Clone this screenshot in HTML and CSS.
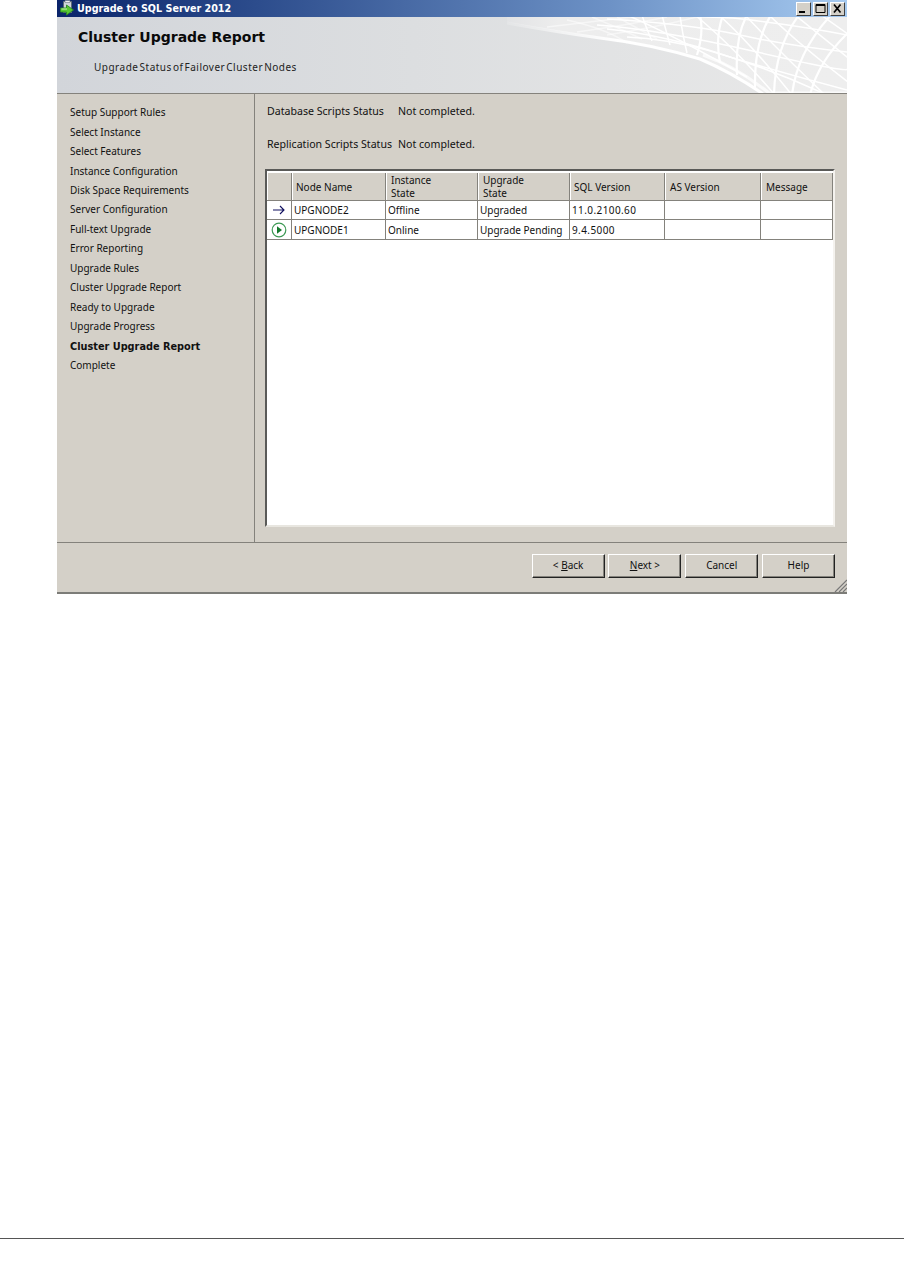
FILE: index.html
```html
<!DOCTYPE html>
<html lang="en">
<head>
<meta charset="utf-8">
<title>Upgrade to SQL Server 2012</title>
<link rel="stylesheet" href="styles.css">
</head>
<body>
<main class="window">
  <div class="titlebar">
    <svg class="app-icon" width="16" height="17" viewBox="0 0 16 17">
      <path d="M4.500 1.500h8v11h-8z" fill="#cfd4da" stroke="#5e6b78"/>
      <path d="M6 .5h5v2H6z" fill="#eef0f2" stroke="#6b7783" stroke-width=".6"/>
      <path d="M1.500 8h6V5l7 5-7 5v-3h-6z" fill="#58c832" stroke="#2a8a22" stroke-width=".9"/>
      <path d="M2.500 9h5.500" stroke="#c8f5b0" fill="none"/>
    </svg>
    <span class="title-text">Upgrade to SQL Server 2012</span>
    <div class="caption-buttons">
      <button class="caption-btn" aria-label="Minimize"><svg width="13" height="11" viewBox="0 0 13 11"><path d="M2 8h6v2H2z" fill="#000"/></svg></button>
      <button class="caption-btn" aria-label="Maximize"><svg width="13" height="11" viewBox="0 0 13 11"><path d="M2 1.500h9v8H2zM2 2.500h9" fill="none" stroke="#000"/></svg></button>
      <button class="caption-btn close" aria-label="Close"><svg width="13" height="11" viewBox="0 0 13 11"><path d="M3 1.500l6.500 8M9.500 1.500l-6.500 8" fill="none" stroke="#000" stroke-width="1.700"/></svg></button>
    </div>
  </div>

  <header class="banner">
    <svg class="mesh" width="340" height="76" viewBox="0 0 340 76">
      <defs>
        <linearGradient id="meshfill" x1="0" x2="1" y1="0" y2="0">
          <stop offset="0" stop-color="#e2e3e5"/>
          <stop offset=".15" stop-color="#ededed"/>
          <stop offset="1" stop-color="#eeeeee"/>
        </linearGradient>
        <linearGradient id="edgefade" gradientUnits="userSpaceOnUse" x1="0" x2="110" y1="0" y2="0">
          <stop offset="0" stop-color="#fff" stop-opacity=".15"/>
          <stop offset="1" stop-color="#fff" stop-opacity="1"/>
        </linearGradient>
      </defs>
      <path d="M0 0H340V76H256Q226 55 193 41Q143 26 93 20Q50 14 0 5z" fill="url(#meshfill)"/>
      <g fill="none" stroke="#fff" stroke-width="1.500" stroke-opacity=".5">
        <path d="M60 3Q100 12 120 26"/>
        <path d="M85 0Q110 10 135 22"/>
        <path d="M110 0L150 22"/>
        <path d="M40 10Q90 4 125 0"/>
        <path d="M70 15Q120 8 160 0"/>
        <path d="M100 18Q150 10 190 0"/>
      </g>
      <g fill="none" stroke="#fff" stroke-width="1.500">
        <path d="M150 -2L226 1Q290 8 340 18"/>
        <path d="M100 2Q183 7 233 18T340 35"/>
        <path d="M90 8Q150 12 250 35T340 51"/>
        <path d="M100 12Q160 18 226 41Q283 58 340 73"/>
        <path d="M120 20Q160 22 200 33Q260 50 320 78"/>
        <path d="M120 -2Q170 20 240 60"/>
        <path d="M188 -2Q225 28 268 78"/>
        <path d="M212 -2Q245 28 285 78"/>
        <path d="M238 -2Q270 32 318 78"/>
        <path d="M262 -2Q295 30 345 68"/>
        <path d="M288 -2L345 44"/>
        <path d="M314 -2L345 20"/>
        <path d="M135 -2Q138 8 145 24"/>
        <path d="M155 -2Q158 10 163 28"/>
        <path d="M173 -2Q175 15 180 36"/>
      </g>
      <g fill="none" stroke="#fff" stroke-width="2.200">
        <path d="M193 -2Q197 15 190 38"/>
        <path d="M216 -2Q208 20 213 46"/>
        <path d="M240 -2Q228 20 230 58"/>
        <path d="M264 -2Q247 25 248 72"/>
        <path d="M292 -2Q268 30 267 78"/>
        <path d="M324 -2Q290 35 285 78"/>
        <path d="M345 12Q312 42 303 78"/>
      </g>
      <path d="M0 6Q50 15 93 21Q143 27 193 42Q226 56 256 77" fill="none" stroke="url(#edgefade)" stroke-width="3"/>
      <path d="M196 38Q230 50 262 76H340" fill="none" stroke="#fff" stroke-width="3" stroke-opacity=".7"/>
    </svg>
    <h1 class="banner-title">Cluster Upgrade Report</h1>
    <p class="banner-sub">Upgrade Status of Failover Cluster Nodes</p>
  </header>

  <div class="body">
    <nav class="steps">
      <a>Setup Support Rules</a>
      <a>Select Instance</a>
      <a>Select Features</a>
      <a>Instance Configuration</a>
      <a>Disk Space Requirements</a>
      <a>Server Configuration</a>
      <a>Full-text Upgrade</a>
      <a>Error Reporting</a>
      <a>Upgrade Rules</a>
      <a>Cluster Upgrade Report</a>
      <a>Ready to Upgrade</a>
      <a>Upgrade Progress</a>
      <a class="current">Cluster Upgrade Report</a>
      <a>Complete</a>
    </nav>
    <section class="content">
      <div class="status-row"><span class="status-label">Database Scripts Status</span><span>Not completed.</span></div>
      <div class="status-row second"><span class="status-label">Replication Scripts Status</span><span>Not completed.</span></div>
      <div class="grid-frame">
        <div class="grid">
          <div class="head corner"></div>
          <div class="head tight">Node Name</div>
          <div class="head two">Instance<br>State</div>
          <div class="head two">Upgrade<br>State</div>
          <div class="head tight">SQL Version</div>
          <div class="head">AS Version</div>
          <div class="head">Message</div>

          <div class="cell mark"><svg width="14" height="10" viewBox="0 0 14 10"><path d="M1 5h11M8 1l4 4-4 4" fill="none" stroke="#101060" stroke-width="1.100"/></svg></div>
          <div class="cell">UPGNODE2</div>
          <div class="cell">Offline</div>
          <div class="cell">Upgraded</div>
          <div class="cell num">11.0.2100.60</div>
          <div class="cell"></div>
          <div class="cell"></div>

          <div class="cell mark"><svg width="16" height="16" viewBox="0 0 16 16"><circle cx="8" cy="8" r="6.800" fill="#fff" stroke="#3d9a55" stroke-width="1.200"/><path d="M6 4.200L11 8l-5 3.800z" fill="#137a2c"/></svg></div>
          <div class="cell">UPGNODE1</div>
          <div class="cell">Online</div>
          <div class="cell">Upgrade Pending</div>
          <div class="cell num">9.4.5000</div>
          <div class="cell"></div>
          <div class="cell"></div>
        </div>
      </div>
    </section>
  </div>

  <footer class="footer">
    <button class="btn">&lt; <u>B</u>ack</button>
    <button class="btn"><u>N</u>ext &gt;</button>
    <button class="btn">Cancel</button>
    <button class="btn">Help</button>
    <svg class="grip" width="13" height="13" viewBox="0 0 13 13"><path d="M1 13L13 1M5 13l8-8M9 13l4-4" fill="none" stroke="#777" stroke-width="1.200"/></svg>
  </footer>
</main>
<hr class="page-rule">
</body>
</html>
```
FILE: styles.css
```css
* { box-sizing: border-box; }
html, body { margin: 0; padding: 0; background: #fff; }
body {
  width: 904px;
  height: 1284px;
  overflow: hidden;
  font-family: "Noto Sans", "Liberation Sans", sans-serif;
  font-size: 10px;
  color: #111;
}
.window {
  width: 790px;
  height: 594px;
  margin-left: 57px;
  display: flex;
  flex-direction: column;
  background: #d4d0c8;
  border-bottom: 2px solid #7c7c78;
}
.titlebar {
  height: 17px;
  flex: none;
  display: flex;
  align-items: center;
  padding-left: 2px;
  background: linear-gradient(90deg, #0a246a 0%, #2c4c8c 25%, #6d92c6 70%, #a6caf0 100%);
}
.app-icon { flex: none; margin-right: 2px; }
.title-text {
  font-family: "DejaVu Sans", sans-serif;
  font-weight: 700;
  font-size: 9.600px;
  color: #fff;
}
.caption-buttons { margin-left: auto; display: flex; gap: 2px; padding-right: 2px; }
.caption-btn {
  width: 15px;
  height: 14px;
  padding: 0;
  display: flex;
  align-items: center;
  justify-content: center;
  background: #d4d0c8;
  border: 1px solid;
  border-color: #fff #404040 #404040 #fff;
}
.banner {
  position: relative;
  height: 77px;
  flex: none;
  padding: 11px 0 0 21px;
  background: linear-gradient(90deg, #d2d5da 0%, #dcdee0 45%, #e9e9e9 100%);
  border-bottom: 1px solid #84827c;
  overflow: hidden;
}
.mesh { position: absolute; right: 0; top: 0; }
.banner-title {
  position: relative;
  margin: 0;
  font-family: "DejaVu Sans", sans-serif;
  font-size: 14px;
  line-height: 18px;
  font-weight: 700;
  color: #0a0a0a;
}
.banner-sub {
  position: relative;
  margin: 14px 0 0 16px;
  font-size: 10px;
  line-height: 14px;
  letter-spacing: .5px;
  word-spacing: -2px;
  color: #222;
}
.body { flex: 1; display: flex; min-height: 0; }
.steps {
  width: 198px;
  flex: none;
  display: flex;
  flex-direction: column;
  padding: 9.120px 0 0 13px;
  border-right: 1px solid #84827c;
}
.steps a { height: 19.470px; line-height: 19.470px; white-space: nowrap; }
.steps .current { font-family: "DejaVu Sans", sans-serif; font-size: 9.750px; font-weight: 700; }
.content { flex: 1; padding: 9px 12px 0 12px; min-width: 0; font-size: 10.600px; }
.status-row { display: flex; height: 16px; line-height: 16px; }
.status-row.second { margin-top: 17px; }
.status-label { width: 131px; flex: none; }
.grid-frame {
  margin: 17px 0 0 -2px;
  width: 570px;
  height: 358px;
  padding: 2px 0 0 0;
  font-size: 10px;
  background: #fff;
  border: 2px solid;
  border-color: #5a5a58 #f4f2ee #e8e6e0 #5a5a58;
}
.grid {
  display: grid;
  grid-template-columns: 25px 94px 92px 92px 95px 96px 72px;
  grid-template-rows: 27px 20px 20px;
}
.grid > div { min-width: 0; }
.head {
  display: flex;
  align-items: center;
  padding: 1px 0 0 4px;
  background: #d4d0c8;
  border-left: 1px solid #fff;
  border-right: 1px solid #84827c;
  line-height: 13px;
}
.head.tight { padding-left: 3px; }
.head.two { display: block; }
.head.corner { padding: 0; }
.cell {
  display: flex;
  align-items: center;
  padding-left: 2px;
  border-right: 1px solid #84827c;
  border-bottom: 1px solid #84827c;
  white-space: nowrap;
  overflow: hidden;
}
.grid .cell:nth-child(-n+14) { border-top: 1px solid #84827c; }
.cell.mark { justify-content: center; padding: 0; }
.cell.num { letter-spacing: .4px; }
.footer {
  position: relative;
  flex: none;
  height: 50px;
  display: flex;
  justify-content: flex-end;
  gap: 3.800px;
  padding: 11px 12px 0 0;
  border-top: 1px solid #84827c;
}
.btn {
  width: 73px;
  height: 24px;
  padding: 0 0 2px;
  font: inherit;
  color: #111;
  background: #d4d0c8;
  border: 1px solid;
  border-color: #fff #222 #222 #fff;
  box-shadow: inset -1px -1px 0 #84827c;
}
.grip { position: absolute; right: 0; bottom: 0; }
.page-rule {
  margin: 644px 0 0 0;
  height: 1px;
  border: 0;
  background: #555;
}
```
